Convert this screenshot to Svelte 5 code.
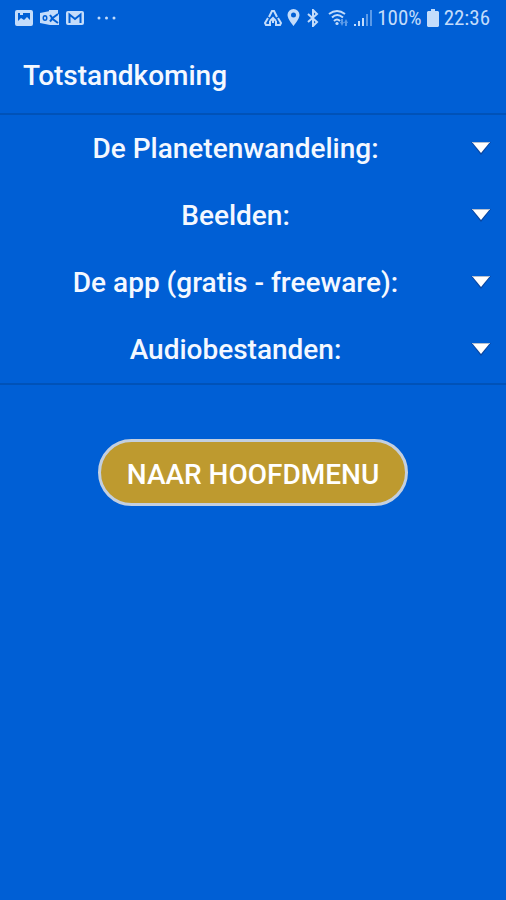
<script lang="ts">
  const sections = [
    'De Planetenwandeling:',
    'Beelden:',
    'De app (gratis - freeware):',
    'Audiobestanden:'
  ];

  let open = $state<number | null>(null);

  function toggle(i: number) {
    open = open === i ? null : i;
  }
</script>

<div class="screen">
  <div class="status">
    <div class="group left">
      <svg width="18" height="18" viewBox="0 0 18 18" aria-hidden="true">
        <path fill-rule="evenodd" d="M2 1h14q2 0 2 2v12q0 2-2 2H2q-2 0-2-2V3q0-2 2-2zM3 4v8l3-3 3 2 3-3 3 3V4H8v2H5V4z" />
      </svg>
      <svg width="19" height="18" viewBox="0 0 19 18" aria-hidden="true">
        <path d="M9 1h9v4H9zM10 5h9v11h-9z" />
        <path fill-rule="evenodd" d="M0 4l10-2v14L0 14zM5 6a2.500 3 0 1 0 0 6a2.500 3 0 1 0 0-6zM5 7.500a1 1.500 0 1 1 0 3a1 1.500 0 1 1 0-3z" />
        <path class="cut" d="M18 5l-6 4.500 6 4.500M10 6l2.500 3.500-2.500 3" />
      </svg>
      <svg width="18" height="18" viewBox="0 0 18 18" aria-hidden="true">
        <rect y="2" width="18" height="14" rx="2" />
        <path class="cut" d="M3.500 14V5.500L9 10l5.500-4.500V14" />
      </svg>
      <svg class="dots" width="20" height="18" viewBox="0 0 20 18" aria-hidden="true">
        <circle cx="2" cy="9" r="1.500" />
        <circle cx="9.500" cy="9" r="1.500" />
        <circle cx="17" cy="9" r="1.500" />
      </svg>
    </div>
    <div class="group right">
      <svg width="18" height="18" viewBox="0 0 18 18" aria-hidden="true">
        <path class="line" d="M5 8l3-6h2l3 6M4 9l-3 5 1 2h5M14 9l3 5-1 2h-5M6 12l3-3 3 3M6 12v3M12 12v3M9 10v4" />
      </svg>
      <svg width="13" height="18" viewBox="0 0 13 18" aria-hidden="true">
        <path fill-rule="evenodd" d="M6.500 0a6 6 0 0 1 6 6c0 4-6 11-6 11S.5 10 .5 6a6 6 0 0 1 6-6zM6.500 3.500a2.500 2.500 0 1 0 0 5a2.500 2.500 0 1 0 0-5z" />
      </svg>
      <svg width="14" height="18" viewBox="0 0 14 18" aria-hidden="true">
        <path class="line" d="M3 5l9 8-4 4V1l4 4-9 8" />
      </svg>
      <svg class="wifi" width="21" height="18" viewBox="0 0 21 18" aria-hidden="true">
        <path class="line" d="M1 5q8-6 16 0M4 8.500q5-5 11 0M6 12q3-3 6 0" />
        <circle cx="9" cy="14.500" r="1.600" />
        <path class="dim" d="M13 10h2v3h1l-2 4-2-4h1zM17 17v-3h-1l2-4 2 4h-1v3z" />
      </svg>
      <svg width="18" height="18" viewBox="0 0 18 18" aria-hidden="true">
        <path d="M0 15h2v2H0zM4 12h2v5H4zM8 9h2v8H8z" />
        <path class="dim" d="M12 5h2v12h-2zM16 1h2v16h-2z" />
      </svg>
      <span>100%</span>
      <svg width="12" height="18" viewBox="0 0 12 18" aria-hidden="true">
        <path d="M4 0h4v2h3l1 1v14l-1 1H1l-1-1V3l1-1h3z" />
      </svg>
      <span>22:36</span>
    </div>
  </div>

  <header>
    <h1>Totstandkoming</h1>
  </header>

  <main>
    <div class="sections">
      {#each sections as section, i}
        <button class="section" aria-expanded={open === i} onclick={() => toggle(i)}>
          <span class="label">{section}</span>
          <svg class="arrow" class:up={open === i} width="20" height="16" viewBox="0 0 20 16" aria-hidden="true">
            <path class="shade" d="M0 1h20L10 14z" />
            <path class="face" d="M1 1h18l-9 11z" />
            <path class="edge" d="M1 1h18l-1 1H2z" />
          </svg>
        </button>
      {/each}
    </div>

    <button class="menu">NAAR HOOFDMENU</button>
  </main>
</div>

<style>
  :global(body) {
    background: #005fd5;
  }

  .screen {
    min-height: 100vh;
    background: #005fd5;
    color: #f4f8ff;
    font-family: Roboto, sans-serif;
  }

  .status {
    display: flex;
    align-items: center;
    justify-content: space-between;
    height: 36px;
    padding: 0 16px 0 15px;
    color: #c3dcfb;
    font-family: 'Roboto Condensed', Roboto, sans-serif;
    font-size: 21px;
  }

  .group {
    display: flex;
    align-items: center;
  }

  .left {
    gap: 7px;
  }

  .right {
    gap: 5px;
  }

  .status svg {
    fill: #c3dcfb;
  }

  .status .line {
    fill: none;
    stroke: #c3dcfb;
    stroke-width: 2;
  }

  .status .cut {
    fill: none;
    stroke: #005fd5;
    stroke-width: 2;
  }

  .status .dim {
    fill: #5b9ae8;
  }

  .dots {
    margin-left: 6px;
  }

  .wifi {
    margin-left: 4px;
  }

  header {
    display: flex;
    align-items: center;
    height: 79px;
    padding: 2px 23px 0;
    border-bottom: 2px solid #0052b8;
    box-sizing: border-box;
  }

  h1 {
    margin: 0;
    font-size: 28px;
    font-weight: 500;
    line-height: 36px;
  }

  main {
    display: flex;
    flex-direction: column;
    align-items: center;
    gap: 54px;
  }

  .sections {
    align-self: stretch;
    border-bottom: 2px solid #0052b8;
  }

  button {
    border: 0;
    color: inherit;
    font-family: inherit;
    font-size: 28px;
    font-weight: 500;
    cursor: pointer;
  }

  .section {
    display: flex;
    align-items: center;
    width: 100%;
    height: 67px;
    padding: 0 15px 0 0;
    background: transparent;
  }

  .label {
    flex: 1;
    text-align: center;
  }

  .arrow.up {
    transform: rotate(180deg);
  }

  .shade {
    fill: #0a459f;
  }

  .face {
    fill: #ffffff;
  }

  .edge {
    fill: #b4bfcf;
  }

  .menu {
    padding: 16px 26px 12px;
    border: 3px solid #c3cfdf;
    border-radius: 34px;
    background: #be9a2f;
    color: #ffffff;
    line-height: 33px;
  }
</style>
